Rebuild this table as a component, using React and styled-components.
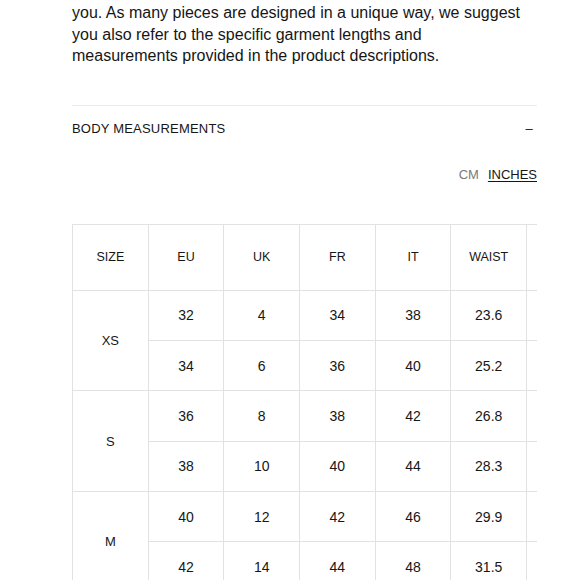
import React from 'react';
import styled, { createGlobalStyle } from 'styled-components';

const GlobalStyle = createGlobalStyle`
  html, body {
    margin: 0;
    padding: 0;
    background: #ffffff;
    overflow: hidden;
  }
  body {
    font-family: "Liberation Sans", Arial, sans-serif;
    color: #161616;
  }
`;

const Page = styled.div`
  width: 580px;
  height: 580px;
  overflow: hidden;
`;

const Content = styled.div`
  width: 465px;
  margin: 2px 0 0 72px;
`;

const Intro = styled.p`
  margin: 0;
  max-width: 455px;
  font-size: 16px;
  line-height: 21.5px;
`;

const Section = styled.section`
  margin-top: 38px;
  border-top: 1px solid #ececec;
`;

const SectionHeader = styled.div`
  display: flex;
  justify-content: space-between;
  align-items: center;
  height: 46px;
  font-size: 13px;
  letter-spacing: 0.2px;
  text-transform: uppercase;
`;

const Toggle = styled.span`
  font-size: 13px;
  padding-right: 4px;
`;

const UnitSwitch = styled.div`
  display: flex;
  justify-content: flex-end;
  gap: 9px;
  margin-top: 15px;
  font-size: 13px;
`;

const Unit = styled.span`
  color: ${p => (p.$active ? '#161616' : '#7a7a7a')};
  text-decoration: ${p => (p.$active ? 'underline' : 'none')};
  text-underline-offset: 2px;
  text-decoration-thickness: 1px;
`;

const TableScroll = styled.div`
  margin-top: 42px;
  overflow: hidden;
`;

const Table = styled.table`
  border-collapse: collapse;
  table-layout: fixed;
  width: ${p => p.$cols * 75.8}px;
`;

const HeadCell = styled.th`
  height: 65px;
  border: 1px solid #e2e2e2;
  font-size: 12.5px;
  font-weight: 400;
  text-align: center;
  padding: 0;
`;

const Cell = styled.td`
  height: 49.4px;
  border: 1px solid #e2e2e2;
  font-size: ${p => (p.$size ? '13px' : '14px')};
  text-align: center;
  padding: 0;
`;

const columns = ['Size', 'EU', 'UK', 'FR', 'IT', 'Waist', 'Hips', 'Bust'];

const rows = [
  { size: 'XS', values: [[32, 4, 34, 38, '23.6', '33.5', '31.1'], [34, 6, 36, 40, '25.2', '35', '32.7']] },
  { size: 'S', values: [[36, 8, 38, 42, '26.8', '36.6', '34.3'], [38, 10, 40, 44, '28.3', '38.2', '35.8']] },
  { size: 'M', values: [[40, 12, 42, 46, '29.9', '39.8', '37.4'], [42, 14, 44, 48, '31.5', '41.3', '39']] },
];

const App = () => (
  <Page>
    <GlobalStyle />
    <Content>
      <Intro>
        you. As many pieces are designed in a unique way, we suggest you also refer to the specific
        garment lengths and measurements provided in the product descriptions.
      </Intro>

      <Section>
        <SectionHeader>
          Body measurements
          <Toggle>–</Toggle>
        </SectionHeader>

        <UnitSwitch>
          <Unit>CM</Unit>
          <Unit $active>INCHES</Unit>
        </UnitSwitch>

        <TableScroll>
          <Table $cols={columns.length}>
            <thead>
              <tr>
                {columns.map(c => (
                  <HeadCell key={c}>{c.toUpperCase()}</HeadCell>
                ))}
              </tr>
            </thead>
            <tbody>
              {rows.map(group =>
                group.values.map((vals, i) => (
                  <tr key={group.size + i}>
                    {i === 0 && <Cell $size rowSpan={2}>{group.size}</Cell>}
                    {vals.map((v, j) => (
                      <Cell key={j}>{v}</Cell>
                    ))}
                  </tr>
                ))
              )}
            </tbody>
          </Table>
        </TableScroll>
      </Section>
    </Content>
  </Page>
);

export default App;
